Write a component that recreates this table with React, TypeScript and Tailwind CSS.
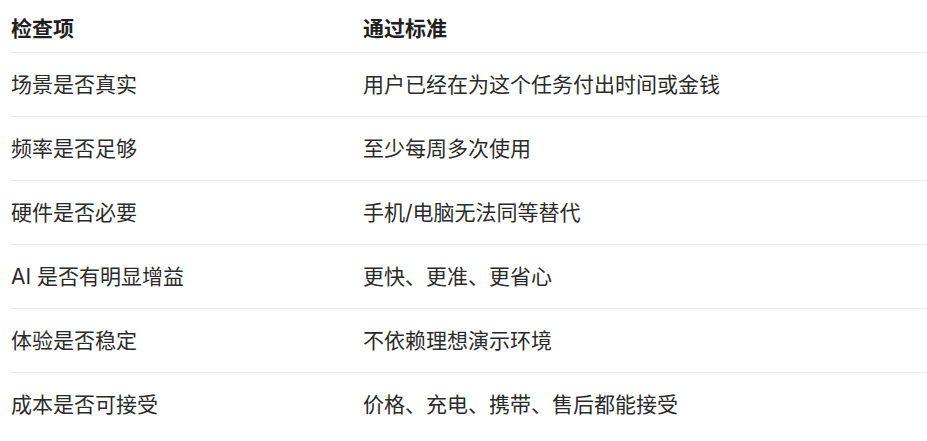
import React from "react";

const rows: [string, string][] = [
  ["场景是否真实", "用户已经在为这个任务付出时间或金钱"],
  ["频率是否足够", "至少每周多次使用"],
  ["硬件是否必要", "手机/电脑无法同等替代"],
  ["AI 是否有明显增益", "更快、更准、更省心"],
  ["体验是否稳定", "不依赖理想演示环境"],
  ["成本是否可接受", "价格、充电、携带、售后都能接受"],
];

export default function App() {
  return (
    <div
      className="w-[927px] h-[441px] bg-white pl-[11px] overflow-hidden"
      style={{ fontFamily: 'Inter, "Noto Sans CJK SC", sans-serif' }}
    >
      <div className="flex flex-col">
        <div className="flex h-[53px] border-b border-[#ececec] pt-[15px] text-[21px] leading-[28px] font-semibold text-[#1f1f1f]">
          <div className="w-[352px]">检查项</div>
          <div className="flex-1">通过标准</div>
        </div>
        {rows.map(([a, b], i) => (
          <div
            key={i}
            className={
              i < rows.length - 1
                ? "flex h-[64px] items-center border-b border-[#ececec] text-[21px] leading-[28px] text-[#2b2b2b]"
                : "flex h-[64px] items-center text-[21px] leading-[28px] text-[#2b2b2b]"
            }
          >
            <div className="w-[352px]">{a}</div>
            <div className="flex-1">{b}</div>
          </div>
        ))}
      </div>
    </div>
  );
}
